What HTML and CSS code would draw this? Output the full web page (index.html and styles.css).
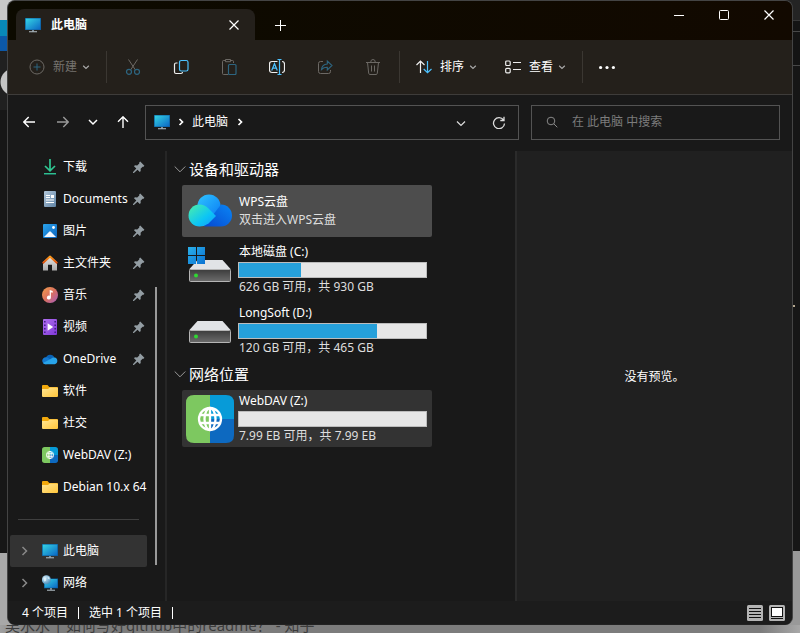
FILE: index.html
```html
<!DOCTYPE html>
<html lang="zh-CN">
<head>
<meta charset="utf-8">
<title>此电脑</title>
<link rel="stylesheet" href="styles.css">
</head>
<body>
<svg class="defs" aria-hidden="true">
  <defs>
    <linearGradient id="g-screen" x1="0" y1="0" x2="1" y2="1"><stop offset="0" stop-color="#35d5e4"/><stop offset="1" stop-color="#0b67c4"/></linearGradient>
    <linearGradient id="g-down" x1="0" y1="0" x2="0" y2="1"><stop offset="0" stop-color="#35c98b"/><stop offset="1" stop-color="#1fae94"/></linearGradient>
    <linearGradient id="g-doc" x1="0" y1="0" x2="1" y2="1"><stop offset="0" stop-color="#b4c8da"/><stop offset="1" stop-color="#5f84a6"/></linearGradient>
    <linearGradient id="g-pic" x1="0" y1="0" x2="1" y2="1"><stop offset="0" stop-color="#2aa4ec"/><stop offset="1" stop-color="#0a62bd"/></linearGradient>
    <linearGradient id="g-house" x1="0" y1="0" x2="0" y2="1"><stop offset="0" stop-color="#e8e8e8"/><stop offset="1" stop-color="#aaa"/></linearGradient>
    <linearGradient id="g-roof" x1="0" y1="0" x2="0" y2="1"><stop offset="0" stop-color="#ff9d1c"/><stop offset="1" stop-color="#d9480a"/></linearGradient>
    <linearGradient id="g-music" x1="0" y1="0" x2="1" y2="1"><stop offset="0" stop-color="#f5a04c"/><stop offset=".5" stop-color="#d9705f"/><stop offset="1" stop-color="#a45cc0"/></linearGradient>
    <linearGradient id="g-video" x1="0" y1="0" x2="1" y2="1"><stop offset="0" stop-color="#b070f0"/><stop offset="1" stop-color="#8038d8"/></linearGradient>
    <linearGradient id="g-folder" x1="0" y1="0" x2="1" y2="1"><stop offset="0" stop-color="#ffe694"/><stop offset="1" stop-color="#ffc53a"/></linearGradient>
    <linearGradient id="g-w1" x1="0" y1="0" x2="1" y2="1"><stop offset="0" stop-color="#2fc4ff"/><stop offset="1" stop-color="#0a7cf5"/></linearGradient>
    <linearGradient id="g-w2" x1="0" y1="0" x2="1" y2="1"><stop offset="0" stop-color="#4df0a8"/><stop offset=".6" stop-color="#0cc5f5"/><stop offset="1" stop-color="#1597ff"/></linearGradient>
    <linearGradient id="g-w3" x1="1" y1="0" x2="0" y2="1"><stop offset="0" stop-color="#0a86f5"/><stop offset="1" stop-color="#0648d0"/></linearGradient>
    <linearGradient id="g-drive" x1="0" y1="0" x2="0" y2="1"><stop offset="0" stop-color="#3c3c3c"/><stop offset="1" stop-color="#6c6c6c"/></linearGradient>
    <linearGradient id="g-win" x1="0" y1="0" x2="1" y2="1"><stop offset="0" stop-color="#2bb0ea"/><stop offset="1" stop-color="#0a72d2"/></linearGradient>
    <radialGradient id="g-globe" cx=".35" cy=".3" r=".8"><stop offset="0" stop-color="#d4ecf8"/><stop offset="1" stop-color="#3b86b8"/></radialGradient>
  </defs>
  <symbol id="pc" viewBox="0 0 16 16"><path d="M0 1h16v12H0z" fill="#0d5c9c"/><path d="M.7 1.6h14.6v10.8H.7z" fill="url(#g-screen)"/><path d="M7 13h2v1.5H7z" fill="#7e8e98"/><path d="M4 14.3h8v1H4z" fill="#b8c4cc"/></symbol>
  <symbol id="network" viewBox="0 0 16 16"><path d="M2 3.5h14v9.8H2z" fill="#0d5c9c"/><path d="M2.7 4h12.6v8.7H2.7z" fill="url(#g-screen)"/><path d="M8 13h2v1.7H8z" fill="#7e8e98"/><path d="M5 14.7h8v1H5z" fill="#b8c4cc"/><circle cx="4.4" cy="4.7" r="4.5" fill="url(#g-globe)"/><path d="M1.5 3c2-.5 3 .5 2.6 2s-1.6 2-2.2 1zM5.5 1.5c1.5.5 2.5 1.7 2.2 3l-1.7-.7z" fill="#e2f2fa" opacity=".8"/></symbol>
  <symbol id="download" viewBox="0 0 16 16"><path d="M8 0v11M3 7l5 4.8L13 7" fill="none" stroke="#2fc692" stroke-width="1.7"/><path d="M2 14h12v1.6H2z" fill="url(#g-down)"/></symbol>
  <symbol id="doc" viewBox="0 0 16 16"><rect x="2" width="12" height="16" rx="1" fill="url(#g-doc)"/><path d="M4 4.5h4M4 6.5h4M4 9h8M4 11.5h8" stroke="#fff"/><path d="M9 4h3v3H9z" fill="#fff"/></symbol>
  <symbol id="picture" viewBox="0 0 16 16"><rect x="1" y="1" width="14" height="14" rx="1" fill="url(#g-pic)"/><path d="M2 14l5.2-5.3q.8-.7 1.6 0L14 14z" fill="#f1f8ff"/><circle cx="11.5" cy="4.5" r="1.4" fill="#fff"/></symbol>
  <symbol id="home" viewBox="0 0 16 16"><path d="M1 7l7-6 7 6v8.5h-5V9.8H6v5.7H1z" fill="url(#g-house)"/><path d="M.7 8.2L8 1.5l7.3 6.7" fill="none" stroke="url(#g-roof)" stroke-width="1.9" stroke-linejoin="round"/></symbol>
  <symbol id="music" viewBox="0 0 16 16"><circle cx="8" cy="8" r="8" fill="url(#g-music)"/><path d="M7.7 3l3 .9v1.9l-1.8-.5v5.2a2 2 0 1 1-1.2-1.8z" fill="#fff"/></symbol>
  <symbol id="video" viewBox="0 0 16 16"><rect x="1" width="14" height="16" rx="1" fill="url(#g-video)"/><path d="M2 2h1.6v1.6H2zM2 5.5h1.6v1.6H2zM2 9h1.6v1.6H2zM2 12.5h1.6v1.6H2zM12.4 2H14v1.6h-1.6zM12.4 5.5H14v1.6h-1.6zM12.4 9H14v1.6h-1.6zM12.4 12.5H14v1.6h-1.6z" fill="#46208a"/><path d="M5.6 4.3l5.6 3.7-5.6 3.7z" fill="#fff"/></symbol>
  <symbol id="onedrive" viewBox="0 0 16 16"><path d="M3.8 7a4.6 4.6 0 0 1 8.7-.4L8.5 10z" fill="#0a63b6"/><path d="M3.6 13.2A3.5 3.5 0 1 1 5.4 6.6L13 12z" fill="#1479d0"/><path d="M12.4 6.6a3.4 3.4 0 0 1 .2 6.7H3.5q-1.6 0-2.5-1.3l8-4.2q1.2-1.2 3.4-1.2z" fill="#28a4ea"/></symbol>
  <symbol id="folder" viewBox="0 0 16 16"><path d="M0 3q0-1 1-1h4.500L7.300 4H15q1 0 1 1v5H0z" fill="#f2a90c"/><path d="M0 6h6l1.700-1.500H15q1 0 1 1V13q0 1-1 1H1q-1 0-1-1z" fill="url(#g-folder)"/></symbol>
  <symbol id="webdav" viewBox="0 0 48 48"><path d="M24 0H8Q0 0 0 8v32q0 8 8 8h16z" fill="#7dc860"/><path d="M24 0h16q8 0 8 8v16H24z" fill="#079bd8"/><path d="M24 24h24v16q0 8-8 8H24z" fill="#0d69c0"/><g fill="none" stroke="#fff" stroke-width="2.300"><circle cx="24" cy="24" r="11"/><ellipse cx="24" cy="24" rx="5.500" ry="11"/><path d="M24 13v22M14 20h20M14 28h20"/></g></symbol>
  <symbol id="wps" viewBox="0 0 48 48"><circle cx="23" cy="19" r="11.500" fill="url(#g-w1)"/><path d="M35 17.500a11 11 0 0 1 0 22H18z" fill="url(#g-w3)"/><path d="M13.500 17.500q5 0 9 4l7.500 7.500-7.500 7.500q-4 3-9 3a11 11 0 0 1 0-22z" fill="url(#g-w2)"/></symbol>
  <symbol id="drive" viewBox="0 0 48 48"><path d="M11.500 14h25L45 23.500H3z" fill="#e1e3e6"/><rect x="3.500" y="23.500" width="41" height="12" rx="1" fill="url(#g-drive)" stroke="#b5b5b5"/><circle cx="10" cy="29.500" r="2" fill="#2fd832"/></symbol>
  <symbol id="windrive" viewBox="0 0 48 48"><use href="#drive"/><path d="M2 1h8v8H2zM11 1h8v8h-8zM2 10h8v8H2zM11 10h8v8h-8z" fill="url(#g-win)"/></symbol>
  <symbol id="pin" viewBox="0 0 12 12"><path d="M7.200.6l4.200 4.200-.8 1-1-.1-2 2.100.1 2.300-.9.900-2.300-2.300L.9 12l-.9.100.1-1 3.200-3.600L1 5.200l.9-.9 2.300.1 2.100-2-.1-1z" fill="#939da3"/></symbol>
  <symbol id="down" viewBox="0 0 8 8"><path d="M1.200 2.800L4 5.400l2.800-2.600" fill="none" stroke="currentColor" stroke-width="1.200"/></symbol>
  <symbol id="right" viewBox="0 0 8 12"><path d="M1.500 2l4 4-4 4" fill="none" stroke="currentColor" stroke-width="1.500"/></symbol>
  <symbol id="crumb" viewBox="0 0 8 12"><path d="M2.500 3l3 3-3 3" fill="none" stroke="currentColor" stroke-width="1.700"/></symbol>
  <symbol id="expand" viewBox="0 0 12 12"><path d="M.7 3.500L6 8.800l5.300-5.300" fill="none" stroke="currentColor"/></symbol>
  <symbol id="close" viewBox="0 0 12 12"><path d="M1.500 1.500l9 9M10.500 1.500l-9 9" stroke="currentColor" stroke-width="1.200"/></symbol>
  <symbol id="plus" viewBox="0 0 12 12"><path d="M6.500 1v11M1 6.500h11" stroke="currentColor"/></symbol>
</svg>

<div class="backdrop" aria-hidden="true">
  <div class="strip strip-left"></div>
  <div class="strip strip-right"><span class="speck"></span></div>
  <div class="under"><div class="under-text">吴水水 | 如何写好github中的readme？ - 知乎</div></div>
</div>

<div class="window">
  <header class="titlebar">
    <div class="tab"><svg class="i16"><use href="#pc"/></svg><span class="tab-title">此电脑</span><button class="tab-close" aria-label="关闭标签页"><svg class="i12"><use href="#close"/></svg></button></div>
    <button class="new-tab" aria-label="新建标签页"><svg class="i12"><use href="#plus"/></svg></button>
    <div class="controls">
      <button aria-label="最小化"><svg class="i12" viewBox="0 0 12 12"><path d="M1 6.500h10" stroke="#fff"/></svg></button>
      <button aria-label="最大化"><svg class="i12" viewBox="0 0 12 12"><rect x="1.500" y="1.500" width="9" height="9" rx="1" fill="none" stroke="#fff"/></svg></button>
      <button aria-label="关闭"><svg class="i12"><use href="#close"/></svg></button>
    </div>
  </header>

  <div class="toolbar">
    <button class="labelled dim"><svg class="i16" viewBox="0 0 16 16" fill="none"><circle cx="8" cy="8" r="7" stroke="#6c6965"/><path d="M8 4.500v7M4.500 8h7" stroke="#2d6580"/></svg><span>新建</span><svg class="i8"><use href="#down"/></svg></button>
    <i class="sep"></i>
    <button class="tool" aria-label="剪切"><svg class="i16" viewBox="0 0 16 16" fill="none"><path d="M3.500.5l6.800 10.300M12.500.5L5.700 10.800" stroke="#6c6965"/><g stroke="#2d6580" stroke-width="1.200"><circle cx="4" cy="12.800" r="2.500"/><circle cx="12" cy="12.800" r="2.500"/></g></svg></button>
    <button class="tool" aria-label="复制"><svg class="i16" viewBox="0 0 16 16" fill="none" stroke-width="1.200"><path d="M4.500 4H3Q1.500 4 1.500 5.500v7.500Q1.500 14.500 3 14.500h5Q9.500 14.500 9.500 13" stroke="#eee"/><rect x="6.500" y="1.500" width="8.500" height="10.500" rx="1.800" stroke="#4cc2ff"/></svg></button>
    <button class="tool" aria-label="粘贴"><svg class="i16" viewBox="0 0 16 16" fill="none"><path d="M7 15.500H2.500q-1 0-1-1v-12q0-1 1-1h2M9.500 1.500h2q1 0 1 1V4M4.500.5h5v2.200h-5z" stroke="#6c6965"/><rect x="7.500" y="5.500" width="7.500" height="10" rx="1" stroke="#2d6580" stroke-width="1.200"/></svg></button>
    <button class="tool" aria-label="重命名"><svg class="i16" viewBox="0 0 16 16" fill="none"><path d="M8.500 2.500H3Q.5 2.500.5 5v6Q.5 13.500 3 13.500h5.500M13 2.500q2.500 0 2.500 2.500v6q0 2.500-2.500 2.500" stroke="#eee" stroke-width="1.200"/><path d="M2.700 11.500L5.500 4.700l2.800 6.800M3.700 9.200h3.700M10.500.5v15M8.500.5h4M8.500 15.500h4" stroke="#4cc2ff" stroke-width="1.200"/></svg></button>
    <button class="tool" aria-label="共享"><svg class="i16" viewBox="0 0 16 16" fill="none"><path d="M6 2.500H3.500q-2 0-2 2v8q0 2 2 2h8q2 0 2-2V11" stroke="#6c6965"/><path d="M4.500 10.500c.3-3.500 2.200-5.300 5.800-5.500v-3L15 6.500 10.300 11V8.300C7.500 8.200 6 9 4.500 10.500z" stroke="#2d6580" stroke-width="1.100"/></svg></button>
    <button class="tool" aria-label="删除"><svg class="i16" viewBox="0 0 16 16" fill="none" stroke="#6c6965"><path d="M1 3.500h14M5.700 3.300q0-2.800 2.300-2.800t2.300 2.800M2.500 3.500l1.200 10.800q.2 1.200 1.300 1.200h6q1.100 0 1.300-1.200l1.200-10.800M6.500 6.500v6M9.500 6.500v6"/></svg></button>
    <i class="sep"></i>
    <button class="labelled"><svg class="i16" viewBox="0 0 16 16" fill="none" stroke-width="1.200"><path d="M4.500 14V2.500M.5 6l4-4 4 4" stroke="#eee"/><path d="M11.500 2v11.500M7.700 10l3.800 3.700L15.500 10" stroke="#4cc2ff"/></svg><span>排序</span><svg class="i8"><use href="#down"/></svg></button>
    <button class="labelled"><svg class="i16" viewBox="0 0 16 16" fill="none" stroke="#eee" stroke-width="1.200"><rect x=".7" y="2" width="4.500" height="4.500" rx="1"/><rect x=".7" y="9.300" width="4.500" height="4.500" rx="1"/><path d="M8 3.500h8M8 10.500h8"/></svg><span>查看</span><svg class="i8"><use href="#down"/></svg></button>
    <i class="sep"></i>
    <button class="tool more" aria-label="更多"><svg class="i16" viewBox="0 0 16 16" fill="#fff"><circle cx="1.600" cy="8.500" r="1.600"/><circle cx="8" cy="8.500" r="1.600"/><circle cx="14.400" cy="8.500" r="1.600"/></svg></button>
  </div>

  <div class="navrow">
    <nav class="history">
      <button class="wide" aria-label="后退"><svg class="i12" viewBox="0 0 12 12" fill="none" stroke="#fff" stroke-width="1.400"><path d="M12 6H1M5.700 1L.8 6l4.900 5"/></svg></button>
      <button class="wide" aria-label="前进"><svg class="i12" viewBox="0 0 12 12" fill="none" stroke="#999" stroke-width="1.400"><path d="M0 6h11M6.300 1l4.900 5-4.900 5"/></svg></button>
      <button class="narrow" aria-label="最近"><svg class="i12" viewBox="0 0 12 12" fill="none" stroke="#fff" stroke-width="1.500"><path d="M2 4l4 4 4-4"/></svg></button>
      <button class="wide" aria-label="上移"><svg class="i12" viewBox="0 0 12 12" fill="none" stroke="#fff" stroke-width="1.400"><path d="M6 12V1M1 5.700L6 .8l5 4.900"/></svg></button>
    </nav>
    <div class="address">
      <svg class="i16"><use href="#pc"/></svg>
      <svg class="crumb"><use href="#crumb"/></svg>
      <a href="#" class="crumb-text">此电脑</a>
      <svg class="crumb"><use href="#crumb"/></svg>
      <button class="addr-drop" aria-label="历史记录"><svg class="i12" viewBox="0 0 12 12" fill="none" stroke="#ddd" stroke-width="1.200"><path d="M2 5.500l4 4 4-4"/></svg></button>
      <button class="addr-drop" aria-label="刷新"><svg class="refresh" viewBox="0 0 14 14" fill="none" stroke="#ddd" stroke-width="1.300"><path d="M11.500 5A5.500 5.500 0 1 0 12.500 8.500M12 1.800V5.500H8.300"/></svg></button>
    </div>
    <label class="search"><svg class="i12" viewBox="0 0 12 12" fill="none" stroke="#888"><circle cx="5" cy="5" r="3.800"/><path d="M7.800 7.800l3.500 3.500"/></svg><input type="text" aria-label="搜索" placeholder="在 此电脑 中搜索"></label>
  </div>

  <div class="body">
    <aside class="sidebar">
      <nav class="tree">
        <a href="#" class="node"><svg class="i16"><use href="#download"/></svg><span>下载</span><svg class="i12"><use href="#pin"/></svg></a>
        <a href="#" class="node"><svg class="i16"><use href="#doc"/></svg><span>Documents</span><svg class="i12"><use href="#pin"/></svg></a>
        <a href="#" class="node"><svg class="i16"><use href="#picture"/></svg><span>图片</span><svg class="i12"><use href="#pin"/></svg></a>
        <a href="#" class="node"><svg class="i16"><use href="#home"/></svg><span>主文件夹</span><svg class="i12"><use href="#pin"/></svg></a>
        <a href="#" class="node"><svg class="i16"><use href="#music"/></svg><span>音乐</span><svg class="i12"><use href="#pin"/></svg></a>
        <a href="#" class="node"><svg class="i16"><use href="#video"/></svg><span>视频</span><svg class="i12"><use href="#pin"/></svg></a>
        <a href="#" class="node"><svg class="i16"><use href="#onedrive"/></svg><span>OneDrive</span><svg class="i12"><use href="#pin"/></svg></a>
        <a href="#" class="node"><svg class="i16"><use href="#folder"/></svg><span>软件</span></a>
        <a href="#" class="node"><svg class="i16"><use href="#folder"/></svg><span>社交</span></a>
        <a href="#" class="node"><svg class="i16"><use href="#webdav"/></svg><span>WebDAV (Z:)</span></a>
        <a href="#" class="node"><svg class="i16"><use href="#folder"/></svg><span>Debian 10.x 64</span></a>
        <hr>
        <a href="#" class="node branch current"><svg class="twist"><use href="#right"/></svg><svg class="i16"><use href="#pc"/></svg><span>此电脑</span></a>
        <a href="#" class="node branch"><svg class="twist"><use href="#right"/></svg><svg class="i16"><use href="#network"/></svg><span>网络</span></a>
      </nav>
      <div class="scroll"><div class="thumb"></div></div>
    </aside>

    <main class="files">
      <h2><svg class="i12"><use href="#expand"/></svg>设备和驱动器</h2>
      <div class="tiles">
        <div class="tile compact selected"><svg class="i48"><use href="#wps"/></svg><div class="info"><div class="name">WPS云盘</div><div class="sub">双击进入WPS云盘</div></div></div>
        <div class="tile"><svg class="i48"><use href="#windrive"/></svg><div class="info"><div class="name">本地磁盘 (C:)</div><div class="bar"><div class="fill" style="width:33%"></div></div><div class="sub">626 GB 可用，共 930 GB</div></div></div>
        <div class="tile"><svg class="i48"><use href="#drive"/></svg><div class="info"><div class="name">LongSoft (D:)</div><div class="bar"><div class="fill" style="width:74%"></div></div><div class="sub">120 GB 可用，共 465 GB</div></div></div>
      </div>
      <h2><svg class="i12"><use href="#expand"/></svg>网络位置</h2>
      <div class="tiles">
        <div class="tile hover"><svg class="i48"><use href="#webdav"/></svg><div class="info"><div class="name">WebDAV (Z:)</div><div class="bar"><div class="fill" style="width:0%"></div></div><div class="sub">7.99 EB 可用，共 7.99 EB</div></div></div>
      </div>
    </main>

    <section class="preview">没有预览。</section>
  </div>

  <footer class="status">
    <span>4 个项目</span><i></i><span>选中 1 个项目</span><i></i>
    <div class="views">
      <button aria-label="详细信息"><svg class="i16" viewBox="0 0 16 16"><rect width="16" height="16" rx="1.500" fill="#b4b4b4"/><path d="M2 3.500h12M2 6.500h12M2 9.500h12M2 12.500h12" stroke="#111"/></svg></button>
      <button aria-label="大缩略图"><svg class="i16" viewBox="0 0 16 16"><rect width="16" height="16" rx="1.500" fill="#b4b4b4"/><rect x="2.500" y="2.500" width="11" height="9" fill="#fff" stroke="#111"/><path d="M2 13.500h12" stroke="#111"/></svg></button>
    </div>
  </footer>
</div>
</body>
</html>
```

FILE: styles.css
```css
* { box-sizing: border-box; }
body {
  margin: 0;
  height: 100vh;
  overflow: hidden;
  background: #161616;
  color: #fff;
  font: 12px/18px "Noto Sans", "Noto Sans CJK SC", sans-serif;
}
.defs { position: absolute; width: 0; height: 0; }
svg { display: block; flex: none; }
button { border: 0; padding: 0; background: none; color: inherit; font: inherit; display: flex; align-items: center; justify-content: center; }
a { color: inherit; text-decoration: none; }
.i8 { width: 8px; height: 8px; }
.i12 { width: 12px; height: 12px; }
.i16 { width: 16px; height: 16px; }
.i48 { width: 48px; height: 48px; }

/* desktop behind the window */
.backdrop { position: absolute; inset: 0; z-index: -1; overflow: hidden; background: linear-gradient(#454545 1px, #161616 1px); }
.strip { position: absolute; top: 0; bottom: 0; width: 16px; }
.strip-left {
  left: 0;
  background:
    radial-gradient(circle at 14px 82px, #222 0 6px, #c4c4c4 7px 13px, transparent 14px) 0 0 / 16px 110px no-repeat,
    linear-gradient(#c8c8c8 20px, #0888b8 20px 36px, #0c58a8 36px 51px, #202020 51px 110px, #171717 110px 553px, #a8a8a8 553px);
}
.strip-right {
  right: 0;
  background: linear-gradient(#242424 20px, #383838 20px 21px, #141414 21px 31px, #484848 31px 32px, #141414 32px 65px, #484848 65px 66px, #161616 66px 551px, #999 551px);
}
.speck { position: absolute; left: 9px; top: 305px; width: 2px; height: 2px; background: #b5a890; }
.under {
  position: absolute; left: 0; right: 0; bottom: 0;
  height: 8px; padding-left: 5px;
  overflow: hidden;
  background: linear-gradient(90deg, #a0a0a0, #7c7c7c 30px calc(100% - 40px), #a8a8a8);
  color: #3c3c3c;
  font-size: 15px; line-height: 20px;
  white-space: nowrap;
}
.under-text { margin-top: -10px; }

.window {
  display: flex; flex-direction: column;
  height: calc(100vh - 8px);
  margin: 0 7px;
  border: 1px solid #444;
  border-bottom-color: #222;
  border-radius: 8px;
  overflow: hidden;
  background: #191919;
}

.titlebar { display: flex; align-items: flex-end; height: 39px; padding-left: 8px; background: linear-gradient(90deg, #0c0a00, #120900); }
.tab { display: flex; align-items: center; width: 239px; height: 31px; padding: 0 9px; border-radius: 8px 8px 0 0; background: #24201b; }
.tab-title { flex: 1; margin-left: 10px; font-weight: 700; }
.tab-close { width: 24px; height: 24px; }
.new-tab { width: 50px; height: 31px; }
.controls { display: flex; align-self: flex-start; margin-left: auto; margin-right: 1px; }
.controls button { width: 45px; height: 28px; }

.toolbar { display: flex; align-items: center; height: 55px; padding-left: 7px; background: #24201b; border-bottom: 1px solid #3e3c3a; }
.labelled { height: 32px; padding: 0 14px; }
.labelled span { margin: 0 5px 0 8px; }
.labelled .i8 { color: #aaa; }
.dim { color: #76736f; }
.tool { width: 48px; height: 32px; }
.more { width: 44px; }
.sep { width: 1px; height: 32px; margin: 0 2px; background: #3b3732; }

.navrow { display: flex; align-items: center; height: 56px; padding: 0 12px 2px 4px; }
.history { display: flex; margin-right: 5px; }
.history button { height: 32px; }
.wide { width: 34px; }
.narrow { width: 26px; }
.address { display: flex; align-items: center; flex: 1; height: 35px; padding-left: 8px; border: 1px solid #535353; margin-right: 12px; }
.crumb { width: 8px; height: 12px; margin: 0 7px; }
.crumb-text { margin-right: 1px; }
.address .addr-drop { width: 38px; height: 32px; }
.address .crumb + .addr-drop { margin-left: auto; }
.refresh { width: 14px; height: 14px; }
.search { display: flex; align-items: center; flex: none; width: 249px; height: 35px; padding-left: 14px; border: 1px solid #535353; }
.search input { flex: 1; min-width: 0; margin-left: 14px; padding: 0; border: 0; outline: 0; background: none; color: #fff; font: inherit; }
.search input::placeholder { color: #7c7c7c; opacity: 1; }

.body { display: flex; flex: 1; min-height: 0; }
.sidebar { display: flex; width: 159px; border-right: 2px solid #262626; overflow: hidden; }
.tree { width: 139px; padding-left: 2px; overflow: hidden; }
.node { display: flex; align-items: center; height: 32px; padding-left: 32px; white-space: nowrap; border-radius: 2px; }
.node span { margin-left: 5px; flex: 1; }
.node .i12 { margin-right: 2px; }
.branch { padding-left: 11px; }
.twist { width: 8px; height: 12px; margin-right: 13px; color: #8a8a8a; }
.current { background: #333; }
.tree hr { height: 1px; margin: 16px 8px 15px; border: 0; background: #3f3f3f; }
.scroll { width: 18px; padding: 136px 0 36px 8px; }
.thumb { width: 2px; height: 100%; background: #999; }

.files { flex: 1; min-width: 0; padding: 3px 7px; }
.files h2 { display: flex; align-items: center; gap: 3px; height: 31px; margin: 0; padding-bottom: 2px; font-size: 15px; font-weight: 400; }
.files h2 svg { color: #999; }
.tiles { display: grid; gap: 4px; padding-left: 8px; }
.tile { display: flex; align-items: center; gap: 4px; width: 250px; height: 57px; padding: 0 5px 0 4px; border-radius: 2px; }
.compact { height: 52px; }
.selected { background: #4d4d4d; }
.hover { background: #333; }
.info { flex: 1; white-space: nowrap; }
.name, .sub { padding-left: 1px; }
.sub { color: #dedede; }
.bar { height: 16px; margin-top: 1px; border: 1px solid #bcbcbc; background: #e6e6e6; }
.fill { height: 100%; background: #26a0da; }

.preview { display: flex; align-items: center; justify-content: center; width: 277px; padding-top: 2px; border-left: 2px solid #2b2b2b; background: #202020; }

.status { display: flex; align-items: center; height: 23px; padding: 1px 7px 0 14px; background: #1c1c1c; }
.status > i { width: 1px; height: 12px; margin: 0 10px; background: #fff; }
.views { display: flex; gap: 6px; margin-left: auto; }
```
